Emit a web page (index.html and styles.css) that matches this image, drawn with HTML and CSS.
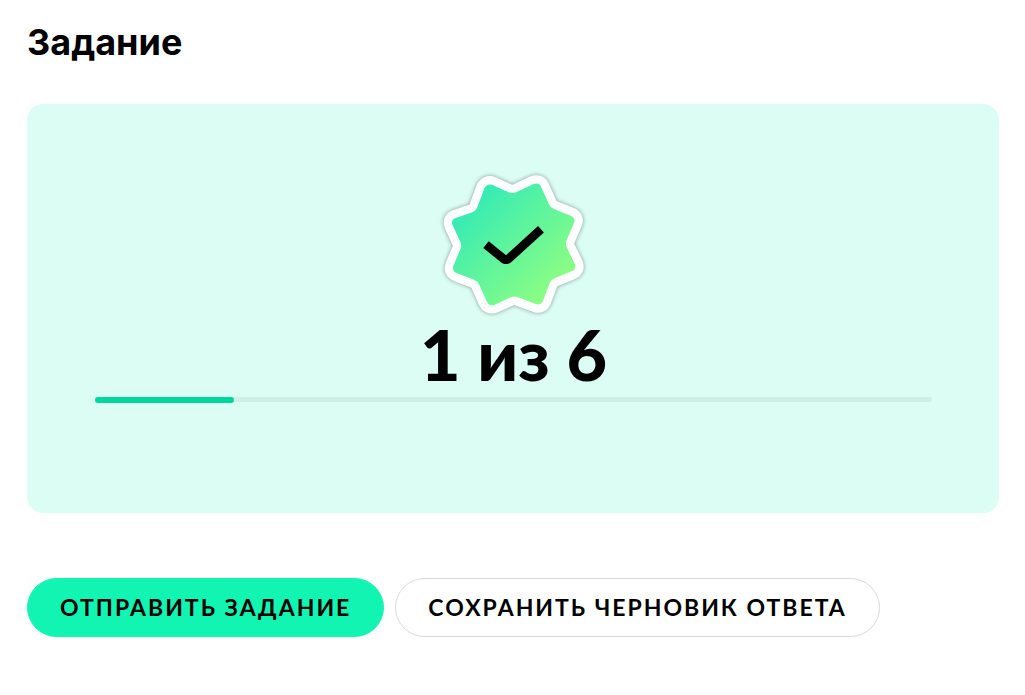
FILE: index.html
```html
<!DOCTYPE html>
<html lang="ru">
<head>
    <meta charset="UTF-8">
    <meta name="viewport" content="width=device-width, initial-scale=1.0">
    <title>Задание</title>
    <link rel="stylesheet" href="styles.css">
</head>
<body>
    <main class="task">
        <h1 class="title">Задание</h1>
        <section class="result">
            <svg class="badge" viewBox="30 20 441 441" aria-hidden="true">
                <defs>
                    <linearGradient id="fill" x1="0.1" y1="0.1" x2="0.9" y2="0.9">
                        <stop offset="0" stop-color="#30eab8"/>
                        <stop offset="1" stop-color="#92ff80"/>
                    </linearGradient>
                    <path id="star" d="M188 59 L236 81 Q248 86 260 80 L309 57 Q326 50 333 64 L357 117 Q361 127 372 131 L422 151 Q438 158 432 173 L410 224 Q406 235 410 246 L434 295 Q441 311 425 318 L374 339 Q364 343 359 353 L339 406 Q332 421 317 416 L264 396 Q253 391 242 396 L194 418 Q177 424 170 408 L147 357 Q143 347 132 343 L81 324 Q64 317 71 300 L91 252 Q96 241 91 230 L68 180 Q61 164 77 158 L129 140 Q138 136 142 126 L163 69 Q171 53 188 59 Z"/>
                </defs>
                <use class="badge-edge" href="#star"/>
                <use href="#star" fill="url(#fill)"/>
                <path class="badge-check" d="M168 238 L220 280 Q228 286 236 280 L333 192"/>
            </svg>
            <div class="count">1 из 6</div>
            <div class="progress" role="progressbar" aria-valuemin="0" aria-valuemax="6" aria-valuenow="1" aria-label="1 из 6">
                <div class="progress-bar" style="width: 16.6%"></div>
            </div>
        </section>
        <div class="actions">
            <button class="btn primary" type="submit">Отправить задание</button>
            <button class="btn" type="button">Сохранить черновик ответа</button>
        </div>
    </main>
</body>
</html>
```
FILE: styles.css
```css
body {
    margin: 0;
    background-color: #ffffff;
    color: #000000;
    font-family: Lato, 'Open Sans', sans-serif;
}

.task {
    padding: 20px 26px 20px 27px;
}

.title {
    margin: 0 0 40px;
    font-family: Inter, sans-serif;
    font-size: 36px;
    line-height: 44px;
    font-weight: 700;
}

.result {
    display: flex;
    flex-direction: column;
    align-items: center;
    padding: 68px 67px 110px 68px;
    border-radius: 16px;
    background-color: #dbfdf4;
}

.badge {
    width: 147px;
    height: 147px;
    overflow: visible;
    filter: drop-shadow(0 0 2px rgba(0, 0, 0, 0.4));
}

.badge-edge {
    fill: #ffffff;
    stroke: #ffffff;
    stroke-width: 50px;
    stroke-linejoin: round;
}

.badge-check {
    fill: none;
    stroke: #000000;
    stroke-width: 26px;
}

.count {
    padding-bottom: 8px;
    font-size: 70px;
    line-height: 70px;
    font-weight: 900;
}

.progress {
    width: 100%;
    height: 5px;
    margin-bottom: 1px;
    border-radius: 3px;
    background-color: #cfefe6;
}

.progress-bar {
    height: 6px;
    border-radius: 3px;
    background-color: #00d89b;
}

.actions {
    display: flex;
    flex-wrap: wrap;
    gap: 11px;
    margin-top: 65px;
}

.btn {
    padding: 0 32px;
    border: 1px solid #d9d9d9;
    border-radius: 30px;
    background-color: #ffffff;
    color: #000000;
    font-family: inherit;
    font-size: 23px;
    line-height: 57px;
    font-weight: 700;
    letter-spacing: 2px;
    text-transform: uppercase;
    cursor: pointer;
}

.primary {
    border-color: #12f5b2;
    background-color: #12f5b2;
}
```
